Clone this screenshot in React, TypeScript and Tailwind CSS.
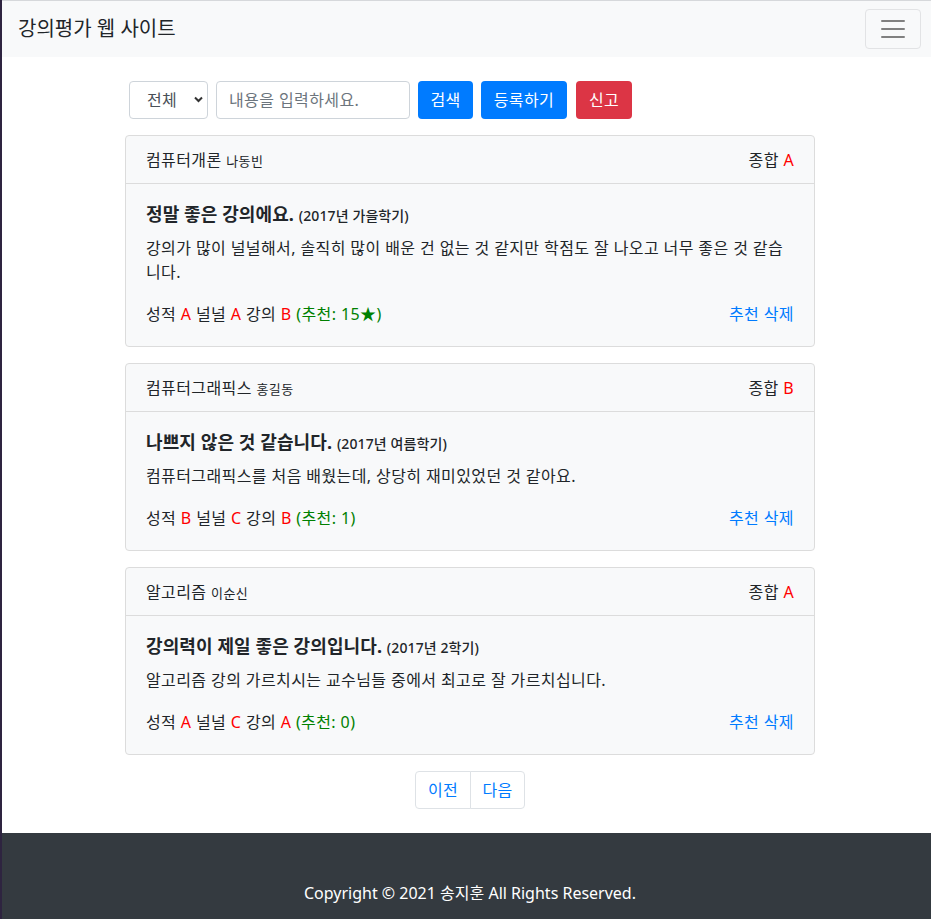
import React from 'react';

type Review = {
    lecture: string;
    professor: string;
    total: string;
    title: string;
    semester: string;
    content: string;
    credit: string;
    free: string;
    teach: string;
    like: string;
};

const reviews: Review[] = [
    {
        lecture: '컴퓨터개론',
        professor: '나동빈',
        total: 'A',
        title: '정말 좋은 강의에요.',
        semester: '(2017년 가을학기)',
        content: '강의가 많이 널널해서, 솔직히 많이 배운 건 없는 것 같지만 학점도 잘 나오고 너무 좋은 것 같습니다.',
        credit: 'A',
        free: 'A',
        teach: 'B',
        like: '(추천: 15★)',
    },
    {
        lecture: '컴퓨터그래픽스',
        professor: '홍길동',
        total: 'B',
        title: '나쁘지 않은 것 같습니다.',
        semester: '(2017년 여름학기)',
        content: '컴퓨터그래픽스를 처음 배웠는데, 상당히 재미있었던 것 같아요.',
        credit: 'B',
        free: 'C',
        teach: 'B',
        like: '(추천: 1)',
    },
    {
        lecture: '알고리즘',
        professor: '이순신',
        total: 'A',
        title: '강의력이 제일 좋은 강의입니다.',
        semester: '(2017년 2학기)',
        content: '알고리즘 강의 가르치시는 교수님들 중에서 최고로 잘 가르치십니다.',
        credit: 'A',
        free: 'C',
        teach: 'A',
        like: '(추천: 0)',
    },
];

function ReviewCard({ review }: { review: Review }) {
    return (
        <div className="mt-4 rounded-[4px] border border-[#dcdcdc] bg-[#f8f9fa] first:mt-0">
            {/* Header */}
            <div className="flex h-12 items-center justify-between border-b border-[#dcdcdc] px-5">
                <div>
                    {review.lecture} <small className="text-[13px]">{review.professor}</small>
                </div>
                <div>
                    종합 <span className="text-[#ff0000]">{review.total}</span>
                </div>
            </div>

            {/* Body */}
            <div className="px-5 pt-5 pb-5">
                <h5 className="mb-[10px] text-[18px] leading-[20px] font-bold tracking-[0.1px]">
                    {review.title} <small className="text-[14px] font-medium">{review.semester}</small>
                </h5>
                <p className="mb-[18px] leading-6">{review.content}</p>
                <div className="flex items-center justify-between leading-6">
                    <div>
                        성적 <span className="text-[#ff0000]">{review.credit}</span> 널널{' '}
                        <span className="text-[#ff0000]">{review.free}</span> 강의{' '}
                        <span className="text-[#ff0000]">{review.teach}</span>{' '}
                        <span className="text-[#008000]">{review.like}</span>
                    </div>
                    <div className="text-[#007bff]">
                        <a href="#">추천</a> <a href="#">삭제</a>
                    </div>
                </div>
            </div>
        </div>
    );
}

export default function App() {
    return (
        <div className="min-h-[919px] border-l-2 border-[#2e2440] bg-white font-['Noto_Sans','Noto_Sans_CJK_KR',sans-serif] text-base text-[#212529]">
            {/* Navbar */}
            <nav className="flex h-[57px] items-center justify-between border-t border-[#d6d8db] bg-[#f8f9fa] pr-[10px] pl-4">
                <a
                    href="#"
                    className="text-[20px] leading-none"
                >
                    강의평가 웹 사이트
                </a>
                <button className="flex h-10 w-14 items-center justify-center rounded-[4px] border border-[#e2e3e5]">
                    <svg
                        width="30"
                        height="30"
                        viewBox="0 0 30 30"
                    >
                        <path
                            d="M4 7h22M4 15h22M4 23h22"
                            stroke="#808080"
                            strokeWidth="2"
                            strokeLinecap="round"
                        />
                    </svg>
                </button>
            </nav>

            {/* Content */}
            <div className="flex justify-center pl-[7px] tracking-[0.4px]">
                <div className="w-[690px]">
                    {/* Search form */}
                    <form className="mt-6 flex gap-2 px-1">
                        <div className="relative">
                            <select className="h-[38px] w-[79px] appearance-none rounded-[4px] border border-[#ced4da] bg-white pl-[17px] text-[#495057]">
                                <option>전체</option>
                            </select>
                            <svg
                                className="pointer-events-none absolute top-[15px] right-[5px]"
                                width="9"
                                height="7"
                                viewBox="0 0 9 7"
                            >
                                <path
                                    d="M1 1.5l3.5 3.5L8 1.5"
                                    fill="none"
                                    stroke="#333"
                                    strokeWidth="2"
                                />
                            </svg>
                        </div>
                        <input
                            className="h-[38px] w-[194px] rounded-[4px] border border-[#ced4da] bg-white px-3 text-[#495057] placeholder:text-[#6c757d]"
                            placeholder="내용을 입력하세요."
                        />
                        <button className="h-[38px] w-[55px] rounded-[4px] bg-[#007bff] text-white">검색</button>
                        <button className="h-[38px] w-[86px] rounded-[4px] bg-[#007bff] text-white">등록하기</button>
                        <button className="ml-px h-[38px] w-[56px] rounded-[4px] bg-[#dc3545] text-white">신고</button>
                    </form>

                    {/* Reviews */}
                    <div className="mt-4">
                        {reviews.map((review) => (
                            <ReviewCard
                                key={review.lecture}
                                review={review}
                            />
                        ))}
                    </div>

                    {/* Pagination */}
                    <ul className="mt-4 flex justify-center">
                        <li>
                            <a
                                href="#"
                                className="flex h-[38px] w-[56px] items-center justify-center rounded-l-[4px] border border-[#dee2e6] bg-white text-[#007bff]"
                            >
                                이전
                            </a>
                        </li>
                        <li>
                            <a
                                href="#"
                                className="-ml-px flex h-[38px] w-[55px] items-center justify-center rounded-r-[4px] border border-[#dee2e6] bg-white text-[#007bff]"
                            >
                                다음
                            </a>
                        </li>
                    </ul>
                </div>
            </div>

            {/* Footer */}
            <footer className="mt-6 bg-[#343a40] py-12 pl-[7px] text-center leading-6 text-white">
                Copyright &copy; 2021 송지훈 All Rights Reserved.
            </footer>
        </div>
    );
}
